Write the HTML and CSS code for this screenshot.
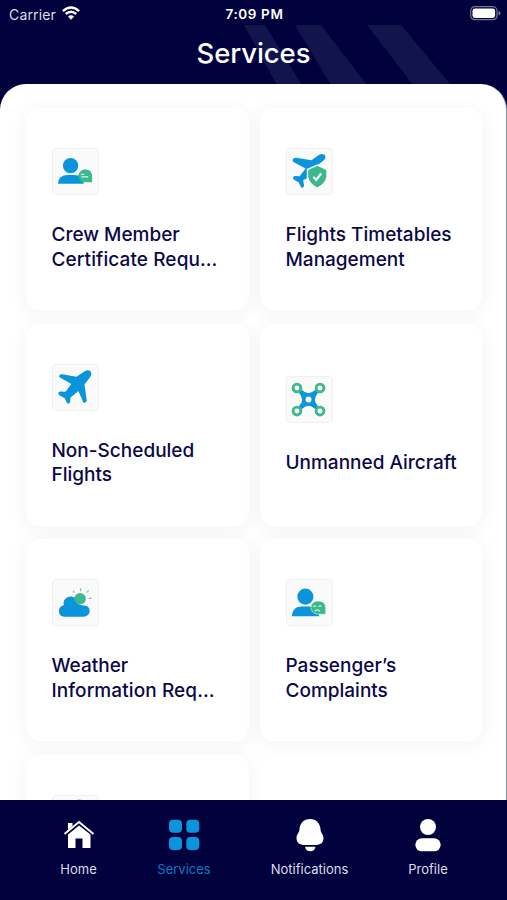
FILE: index.html
```html
<!DOCTYPE html>
<html lang="en">
<head>
<meta charset="utf-8">
<title>Services</title>
<link rel="stylesheet" href="styles.css">
</head>
<body>
<div class="app">
  <header class="header">
    <svg class="stripes" width="230" height="59" viewBox="0 0 230 59"><path d="M0 0h21l37 60H33zM51 0h26l46 60H87zM123 0h34l50 60h-38z"/></svg>
    <div class="status">
      <div class="carrier"><span>Carrier</span>
        <svg width="18" height="14" viewBox="0 0 18 14" fill="none" stroke="#fff" stroke-width="2.5"><path d="M.9 5.1Q9-2 17.1 5.1M3.8 8Q9 3.600 14.200 8"/><path d="M9 13.700 5.900 10.500Q9 8 12.100 10.500Z" fill="#fff" stroke="none"/></svg>
      </div>
      <time class="clock">7:09 PM</time>
      <svg class="battery" width="31" height="15" viewBox="0 0 31 15"><rect x=".7" y=".7" width="26.300" height="13" rx="4" fill="none" stroke="#777894" stroke-width="1.200"/><rect x="2.500" y="2.500" width="22.600" height="9.400" rx="2.300" fill="#fff"/><path d="M28.500 5q2 .6 2 2.300t-2 2.300z" fill="#777894"/></svg>
    </div>
    <h1 class="title">Services</h1>
  </header>
  <main class="sheet">
    <div class="grid">
      <article class="card">
        <div class="tile"><svg viewBox="0 0 46 46"><circle cx="19" cy="17" r="7.800" fill="#0994db"/><path d="M6 35.500q.5-9 10-9h7q8.500 0 9.500 9z" fill="#0994db"/><path d="M33.500 21h1.500q6 1 6 6.500V34h-7.500a6.500 6.500 0 0 1 0-13z" fill="#3bb88d"/><path d="M29.500 26h3.500M30 28.500h7" stroke="#d9f4e9" stroke-width="1.200"/></svg></div>
        <h2 class="name">Crew Member<br><span class="wide">Certificate Requ…</span></h2>
      </article>
      <article class="card">
        <div class="tile"><svg viewBox="0 0 46 46"><path d="M7 10.500q2-2 5-1.200l14 2.300L34 6q4-2 6 .7 1 3-1.500 5L31 17.300q-6 2-9 5l-1 8-3.500 1.500 1 5.700q-1 3-3 1.800l-2.500-5-5-3q-2-2.500 1-3.600l5 .2 6-8L8 13.500q-2-1-1-3z" fill="#0994db"/><path d="M32.500 18l10 4.500v7.200q-1 7.300-10 12.100-9-4.800-10-12.100v-7.200z" fill="#3bb88d" stroke="#fafafa" stroke-width="1.500" transform="translate(-.5 -1.5)"/><path d="m28 28.500 2.800 3 5.200-6.500" fill="none" stroke="#fff" stroke-width="2.200"/></svg></div>
        <h2 class="name">Flights Timetables<br>Management</h2>
      </article>
      <article class="card">
        <div class="tile"><svg viewBox="0 0 46 46"><path d="M8 10q1-1 4-.3l13 2.400 8-5.500q4-2.400 6.500.1 1.800 2.600-1 6.300l-5.300 7 2.400 16.500q-1 3-3.600 1.800L27 26.500l-8.200 7-.2 4q-1.100 3.300-3.500 1.200l-2-4.700-5.600-3q-2.300-2.500.7-3.800l5.600.2 6-8.100L8.500 13q-2.200-1-.5-3z" fill="#0994db"/></svg></div>
        <h2 class="name">Non-Scheduled<br>Flights</h2>
      </article>
      <article class="card">
        <div class="tile"><svg viewBox="0 0 46 46"><path d="m12 12 22 22M34 12 12 34" stroke="#3bb88d" stroke-width="4"/><path d="m16.500 13.500q6.500 6 13 0l3 3q-6 6.500 0 13l-3 3q-6.500-6-13 0l-3-3q6-6.500 0-13z" fill="#0994db"/><circle cx="23" cy="23" r="3" fill="#fff"/><g fill="#fafafa" stroke="#3bb88d" stroke-width="2.900"><circle cx="11.200" cy="11.200" r="4"/><circle cx="34.800" cy="11.200" r="4"/><circle cx="11.200" cy="34.800" r="4"/><circle cx="34.800" cy="34.800" r="4"/></g></svg></div>
        <h2 class="name">Unmanned Aircraft</h2>
      </article>
      <article class="card">
        <div class="tile"><svg viewBox="0 0 46 46"><path d="M12 37.500A6 6 0 0 1 12 25.700q-1-5 3-7.500 5-3 8.800.3 1.500 8 9.200 7.500 5.500.5 5.500 5.800 0 5-6 5.700z" fill="#0994db"/><circle cx="28.700" cy="19.200" r="5.900" fill="#3bb88d"/><path d="M29.200 8.500v3M21.500 11l1.500 2M37.500 10.500 35.500 13M37.500 18.700h3" stroke="#75caaf" stroke-width="1.200"/></svg></div>
        <h2 class="name">Weather<br><span class="wide">Information Req…</span></h2>
      </article>
      <article class="card">
        <div class="tile"><svg viewBox="0 0 46 46"><circle cx="19.800" cy="17" r="8.200" fill="#0994db"/><path d="M6 37q.5-10 10-10h8q9 0 10 10z" fill="#0994db"/><path d="M32.500 21.500q8 0 8 7V35H32a6.700 6.700 0 0 1 .5-13.500z" fill="#3bb88d" stroke="#fafafa" stroke-width=".5"/><path d="M27.800 26.700h3M33.200 26.700h3M29.300 32q2.700-3 5.400 0" fill="none" stroke="#d9f4e9" stroke-width="1.100"/></svg></div>
        <h2 class="name">Passenger’s<br>Complaints</h2>
      </article>
      <article class="card">
        <div class="tile"><svg viewBox="0 0 46 46"><ellipse cx="28" cy="7" rx="5" ry="3.500" fill="#3bb88d"/></svg></div>
        <h2 class="name"></h2>
      </article>
    </div>
  </main>
  <nav class="tabs">
    <a class="tab home"><svg width="32" height="34" viewBox="0 0 32 34"><path d="M5 5h4.500v3L5 12zM5 16.500 16 7.500l11.500 9V30h-8v-9.500h-7V30H5z" fill="#fff"/><path d="m1.500 16 14.500-12 14.500 12" fill="none" stroke="#fff" stroke-width="1.900"/></svg><span>Home</span></a>
    <a class="tab services"><svg width="32" height="34" viewBox="0 0 32 34" fill="#0994db"><rect x="1" y="1.700" width="13" height="13" rx="4"/><rect x="18.300" y="1.700" width="13" height="13" rx="4"/><rect x="1" y="19" width="13" height="13" rx="4"/><rect x="18.300" y="19" width="13" height="13" rx="4"/></svg><span>Services</span></a>
    <a class="tab alerts"><svg width="32" height="34" viewBox="0 0 32 34" fill="#fff"><path d="M16 1c6 0 10 4 10.500 10 0 4 3 5 3 9 0 5-3.500 7-8 7h-11c-4.500 0-8-2-8-7 0-4 3-5 3-9C6 5 10 1 16 1zM11 28.700h10.500q-1 4.600-5.250 4.600T11 28.700z"/></svg><span>Notifications</span></a>
    <a class="tab profile"><svg width="32" height="34" viewBox="0 0 32 34" fill="#fff"><circle cx="16" cy="9" r="8"/><rect x="3.300" y="20.300" width="25.400" height="13" rx="6.500"/></svg><span>Profile</span></a>
  </nav>
</div>
</body>
</html>
```
FILE: styles.css
```css
* { box-sizing: border-box; }
body { margin: 0; font-family: Inter, "Liberation Sans", sans-serif; background: #00013d; }
.app { width: 507px; height: 900px; overflow: hidden; display: flex; flex-direction: column; background: #00013d; }
.header { position: relative; height: 84px; flex: none; color: #fff; }
.stripes { position: absolute; left: 244px; top: 25px; fill: #12154b; }
.status { position: relative; height: 28px; display: grid; grid-template-columns: 1fr auto 1fr; align-items: center; padding: 0 6px 0 9px; }
.carrier { display: flex; align-items: center; gap: 6px; font-size: 14px; letter-spacing: .15px; color: #dedee9; }
.carrier svg { position: relative; top: -1px; }
.clock { font-size: 13.500px; font-weight: 600; letter-spacing: .6px; margin-right: 1px; }
.battery { justify-self: end; position: relative; top: -1px; }
.title { position: relative; margin: 8px 0 0; padding-left: 0; text-align: center; font-size: 27.500px; line-height: 35px; font-weight: 500; letter-spacing: -.1px; }
.sheet { flex: 1; min-height: 0; overflow: hidden; background: #fff; border-radius: 26px 26px 0 0; border-right: 1px solid #8a8b9f; padding: 24px 24px 0 26px; }
.grid { display: grid; grid-template-columns: 223px 222px; grid-auto-rows: 202px; gap: 13.500px 11px; }
.card { display: flex; flex-direction: column; justify-content: center; gap: 28px; padding: 2px 0 0 25.500px; border-radius: 14px; background: #fff; box-shadow: 0 3px 18px 3px rgba(0, 0, 0, .04); }
.tile { width: 47px; height: 47px; flex: none; border: 1px solid #f0f0f0; border-radius: 4px; background: #fafafa; }
.tile svg { display: block; width: 45px; height: 45px; margin-left: -1px; }
.name { margin: 0; min-height: 24.500px; font-size: 19px; line-height: 24.500px; font-weight: 500; color: #0b0847; white-space: nowrap; }
.wide { letter-spacing: .1px; }
.card:last-child .name { min-height: 49px; }
.tabs { height: 100px; flex: none; display: flex; padding: 18px 27px 0 26px; }
.tab { display: flex; flex-direction: column; align-items: center; gap: 9px; color: #dedeeb; font-size: 13px; line-height: 17px; }
.home { width: 105px; }
.services { width: 106px; color: #087dc2; }
.alerts { width: 145px; }
.profile { width: 92px; }
```
